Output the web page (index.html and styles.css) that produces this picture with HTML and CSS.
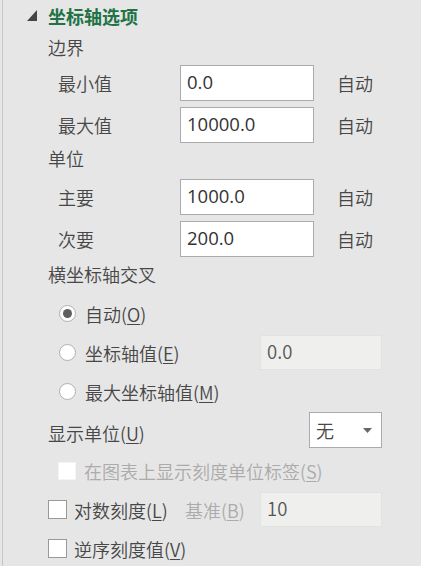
FILE: index.html
```html
<!DOCTYPE html>
<html lang="zh-CN">
<head>
<meta charset="utf-8">
<link rel="stylesheet" href="styles.css">
</head>
<body>
<div class="pane">
  <div class="title-row">
    <svg class="caret" width="10" height="11" viewBox="0 0 10 11"><polygon points="10,0 10,11 0,11" fill="#444"/></svg>
    <span class="title">坐标轴选项</span>
  </div>

  <div class="group-label gl-1">边界</div>
  <div class="field-row fr-first1">
    <span class="field-label">最小值</span>
    <div class="input">0.0</div>
    <span class="auto">自动</span>
  </div>
  <div class="field-row fr-next">
    <span class="field-label">最大值</span>
    <div class="input">10000.0</div>
    <span class="auto">自动</span>
  </div>

  <div class="group-label">单位</div>
  <div class="field-row fr-first2">
    <span class="field-label">主要</span>
    <div class="input">1000.0</div>
    <span class="auto">自动</span>
  </div>
  <div class="field-row fr-next">
    <span class="field-label">次要</span>
    <div class="input">200.0</div>
    <span class="auto">自动</span>
  </div>

  <div class="group-label gl-3">横坐标轴交叉</div>
  <div class="radio-row rr-first">
    <span class="radio checked"></span>
    <span class="radio-text">自动(<u>O</u>)</span>
  </div>
  <div class="radio-row">
    <span class="radio"></span>
    <span class="radio-text rt-fixed">坐标轴值(<u>E</u>)</span>
    <div class="input disabled small">0.0</div>
  </div>
  <div class="radio-row">
    <span class="radio"></span>
    <span class="radio-text">最大坐标轴值(<u>M</u>)</span>
  </div>

  <div class="unit-row">
    <span class="unit-label">显示单位(<u>U</u>)</span>
    <div class="select"><span>无</span><svg width="9" height="5" viewBox="0 0 9 5"><polygon points="0,0 9,0 4.5,5" fill="#666"/></svg></div>
  </div>

  <div class="check-row sub disabled-row">
    <span class="check dis"></span>
    <span class="check-text">在图表上显示刻度单位标签(<u>S</u>)</span>
  </div>
  <div class="check-row">
    <span class="check"></span>
    <span class="check-text ct-fixed">对数刻度(<u>L</u>)</span>
    <span class="base-label">基准(<u>B</u>)</span>
    <div class="input disabled small">10</div>
  </div>
  <div class="check-row">
    <span class="check"></span>
    <span class="check-text">逆序刻度值(<u>V</u>)</span>
  </div>
</div>
</body>
</html>
```

FILE: styles.css
```css
html, body {
  margin: 0;
  padding: 0;
  background: #e6e6e6;
}
body {
  width: 421px;
  height: 566px;
  overflow: hidden;
  font-family: "Open Sans", "Noto Sans CJK SC", sans-serif;
  font-size: 18px;
  color: #474747;
}
.pane {
  margin-left: 2px;
  border-left: 1px solid #c6c6c6;
  height: 566px;
  box-sizing: border-box;
}
.title-row {
  height: 32px;
  display: flex;
  align-items: center;
  padding-left: 24px;
}
.caret {
  margin-right: 11px;
  margin-top: -1px;
}
.title {
  color: #217346;
  font-weight: bold;
  font-size: 18px;
  font-family: "Noto Sans CJK SC", sans-serif;
}
.group-label,
.field-label,
.auto,
.radio-row,
.unit-row,
.check-row {
  font-family: "Noto Sans CJK SC", sans-serif;
  font-weight: 350;
}
.group-label {
  height: 30px;
  line-height: 30px;
  padding-left: 45px;
}
.gl-3 {
  margin-top: 2px;
}
.field-row {
  display: flex;
  align-items: center;
  height: 36px;
  padding-left: 55px;
}
.fr-first1 { margin-top: 3px; }
.fr-first2 { margin-top: 6px; }
.fr-next { margin-top: 6px; }
.field-label {
  width: 122px;
}
.input {
  box-sizing: border-box;
  width: 134px;
  height: 36px;
  border: 1px solid #ababab;
  background: #fff;
  padding-left: 6px;
  line-height: 32px;
  font-size: 18.5px;
  color: #333;
}
.input.disabled {
  background: #efefed;
  border-color: #e2e2e0;
  color: #555;
}
.input.small {
  width: 122px;
  height: 35px;
  line-height: 31px;
}
.auto {
  margin-left: 23px;
}
.radio-row {
  display: flex;
  align-items: center;
  height: 39px;
  padding-left: 56px;
}
.rr-first { margin-top: 5px; }
.radio {
  box-sizing: border-box;
  width: 17px;
  height: 17px;
  border-radius: 50%;
  border: 1px solid #b0b0b0;
  background: #fff;
  display: flex;
  align-items: center;
  justify-content: center;
  margin-right: 9px;
}
.radio.checked::after {
  content: "";
  width: 9px;
  height: 9px;
  border-radius: 50%;
  background: #5f5f5f;
}
.rt-fixed {
  width: 175px;
}
.unit-row {
  display: flex;
  align-items: center;
  height: 38px;
  padding-left: 45px;
}
.unit-label {
  width: 261px;
  margin-top: 5px;
}
.select {
  box-sizing: border-box;
  width: 73px;
  height: 36px;
  border: 1px solid #ababab;
  background: #fff;
  display: flex;
  align-items: center;
  justify-content: space-between;
  padding: 0 9px 0 6px;
}
.check-row {
  display: flex;
  align-items: center;
  height: 39px;
  padding-left: 45px;
}
.check-row.sub {
  padding-left: 55px;
  margin-top: 2px;
}
.check {
  box-sizing: border-box;
  width: 19px;
  height: 19px;
  border: 1px solid #999;
  background: #fff;
  margin-right: 7px;
}
.check.dis {
  width: 18px;
  height: 18px;
  border-color: #f4f4f4;
  margin-right: 8px;
}
.disabled-row .check-text {
  color: #ababab;
}
.ct-fixed {
  width: 111px;
}
.base-label {
  color: #ababab;
  width: 75px;
}
u {
  text-underline-offset: 2px;
  text-decoration-thickness: 1px;
}
```
